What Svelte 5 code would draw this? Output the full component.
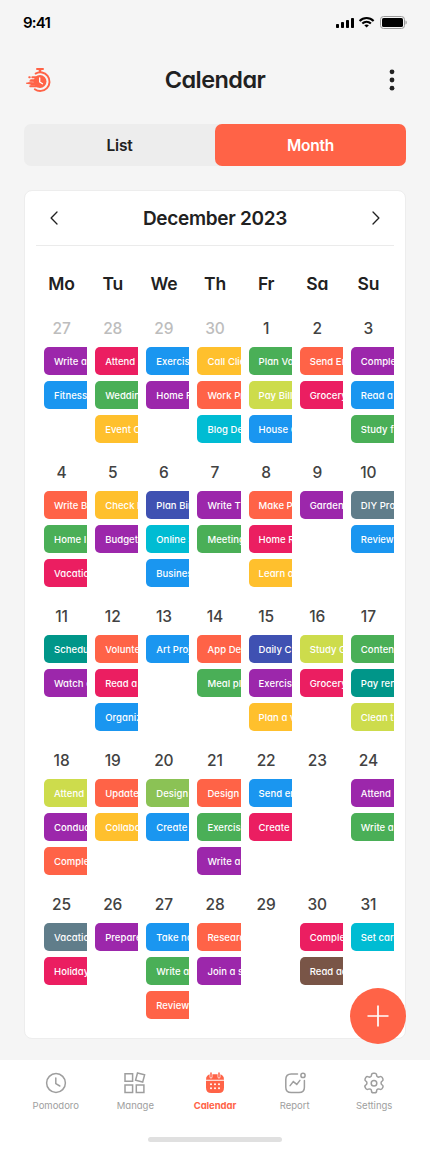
<script>
  const palette = {
    p: '#9c27ab', r: '#eb1e61', b: '#1a96f0', y: '#ffc02d', g: '#4aaf57', l: '#cddc4c',
    o: '#ff6347', c: '#00bcd3', i: '#3f51b2', s: '#607d8a', t: '#009689', n: '#795547', e: '#8bc255'
  };
  const weekdays = ['Mo', 'Tu', 'We', 'Th', 'Fr', 'Sa', 'Su'];
  const days = [
    [27, 'pWrite a', 'bFitness'],
    [28, 'rAttend', 'gWeddin', 'yEvent O'],
    [29, 'bExercise', 'pHome R'],
    [30, 'yCall Clie', 'oWork Pr', 'cBlog De'],
    [1, 'gPlan Va', 'lPay Bill', 'bHouse C'],
    [2, 'oSend Em', 'rGrocery'],
    [3, 'pComple', 'bRead a', 'gStudy f'],
    [4, 'oWrite B', 'gHome I', 'rVacatio'],
    [5, 'yCheck E', 'pBudget'],
    [6, 'iPlan Bir', 'cOnline S', 'bBusines'],
    [7, 'pWrite T', 'gMeeting'],
    [8, 'oMake P', 'rHome R', 'yLearn a'],
    [9, 'pGarden'],
    [10, 'sDIY Pro', 'bReview'],
    [11, 'tSchedu', 'pWatch a'],
    [12, 'oVolunte', 'rRead a', 'bOrganiz'],
    [13, 'bArt Proj'],
    [14, 'oApp De', 'gMeal pl'],
    [15, 'iDaily C', 'pExercise', 'yPlan a v'],
    [16, 'lStudy G', 'rGrocery'],
    [17, 'gConten', 'tPay ren', 'lClean t'],
    [18, 'lAttend', 'pConduc', 'oComple'],
    [19, 'oUpdate', 'yCollabo'],
    [20, 'eDesign', 'bCreate'],
    [21, 'oDesign', 'gExercise', 'pWrite a'],
    [22, 'bSend em', 'rCreate'],
    [23],
    [24, 'pAttend', 'gWrite a'],
    [25, 'sVacatio', 'rHoliday'],
    [26, 'pPrepare'],
    [27, 'bTake no', 'gWrite a', 'oReview'],
    [28, 'oResearc', 'pJoin a s'],
    [29],
    [30, 'rComple', 'nRead ac'],
    [31, 'cSet care']
  ];
</script>

<div class="screen">
  <div class="status">
    <span class="time">9:41</span>
    <svg width="72" height="16" viewBox="0 0 72 16">
      <g>
        <rect x="1" y="10" width="3" height="4" rx=".8" />
        <rect x="6" y="8" width="3" height="6" rx=".8" />
        <rect x="11" y="6" width="3" height="8" rx=".8" />
        <rect x="16" y="4" width="3" height="10" rx=".8" />
      </g>
      <g fill="none" stroke="#000" stroke-width="2.1">
        <path d="M24.6 6.9c4-3.9 10-3.9 14 0" />
        <path d="M27.3 9.6c2.5-2.4 6.1-2.4 8.6 0" />
      </g>
      <path d="M29.3 11.2c1.3-1.1 3.3-1.1 4.6 0l-2.3 2.4z" />
      <rect x="45.5" y="2.5" width="24" height="12" rx="3" fill="none" stroke="#9a9a9a" />
      <rect x="47" y="4" width="21" height="9" rx="1.6" />
      <path d="M70.5 6.5c1.7.4 1.7 3.6 0 4z" fill="#9a9a9a" />
    </svg>
  </div>

  <header>
    <svg width="28" height="28" viewBox="0 0 28 28" fill="none" stroke="#ff6347">
      <path d="M13 3h6" stroke-width="2" stroke-linecap="round" />
      <path d="M16 3.5v3" stroke-width="2.6" />
      <path d="M11.6 7.6A9.3 9.3 0 1 1 10.8 23.2" stroke-width="1.9" stroke-linecap="round" />
      <circle cx="16" cy="15.5" r="6.5" fill="#ff6347" stroke="none" />
      <path d="M8.3 11.3h5M5.2 11.3h.6M7 14.2h6M5 17.200h8M6.2 20.2h7" stroke-width="1.900" stroke-linecap="round" />
      <path d="M2.800 17.200h5M6 15h5M7 18.800h5" stroke-width="1.500" stroke-linecap="round" />
      <path d="M15.700 12v4l2.800 1.700" stroke="#fff" stroke-width="1.300" stroke-linecap="round" stroke-linejoin="round" />
    </svg>
    <h1>Calendar</h1>
    <svg width="28" height="28" viewBox="0 0 28 28" fill="#212121">
      <circle cx="14" cy="5.8" r="2.4" /><circle cx="14" cy="14" r="2.4" /><circle cx="14" cy="22.2" r="2.4" />
    </svg>
  </header>

  <div class="tabs">
    <button>List</button>
    <button class="on">Month</button>
  </div>

  <section class="card">
    <div class="month">
      <svg width="20" height="20" viewBox="0 0 20 20"><path d="M13 4 7.1 10l5.900 6" /></svg>
      <h2>December 2023</h2>
      <svg width="20" height="20" viewBox="0 0 20 20"><path d="M7 4l5.900 6L7 16" /></svg>
    </div>
    <div class="week">
      {#each weekdays as w}<span>{w}</span>{/each}
    </div>
    <div class="grid">
      {#each days as [num, ...events], i}
        <div class="day" class:out={i < 4}>
          <span class="num">{num}</span>
          <div class="events">
            {#each events as ev}
              <div class="chip" style:background={palette[ev[0]]}>{ev.slice(1)}</div>
            {/each}
          </div>
        </div>
      {/each}
    </div>
  </section>

  <button class="fab" aria-label="Add">
    <svg width="24" height="24" viewBox="0 0 24 24"><path d="M12 1.5v21M1.500 12h21" stroke="#fff" stroke-width="1.7" /></svg>
  </button>

  <nav>
    <div class="items">
      <div class="item">
        <svg width="24" height="24" viewBox="0 0 24 24"><circle cx="12" cy="12" r="9.4" /><path d="M11.8 7v5.6l4 2.4" /></svg>
        <span>Pomodoro</span>
      </div>
      <div class="item">
        <svg width="24" height="24" viewBox="0 0 24 24" stroke-linejoin="miter"><path d="M2 2.7h7.6v7.6H2zM2 14h7.6v7.6H2zM13.3 14h7.6v7.6h-7.6zM14.500 2l7.1 1.9-1.9 7.1-7.100-1.900z" /></svg>
        <span>Manage</span>
      </div>
      <div class="item on">
        <svg width="24" height="24" viewBox="0 0 24 24">
          <path d="M3 8.8C3 5.2 4.8 3.300 8.3 3.300h7.400c3.500 0 5.300 1.900 5.300 5.500z" fill="#ff6347" stroke="none" />
          <path d="M3 9.700h18v7.100c0 3.500-1.800 5.200-5.200 5.200H8.200C4.800 22 3 20.300 3 16.800z" fill="#ff6347" stroke="none" />
          <path d="M8 2.200v3.800M16 2.200v3.800" stroke="#fff" stroke-width="2.800" />
          <path d="M8 2v4M16 2v4" stroke="#ff6347" />
          <g fill="#fff" stroke="none"><circle cx="8" cy="13.3" r="1" /><circle cx="12" cy="13.3" r="1" /><circle cx="16" cy="13.3" r="1" /><circle cx="8" cy="17.2" r="1" /><circle cx="12" cy="17.2" r="1" /><circle cx="16" cy="17.2" r="1" /></g>
        </svg>
        <span>Calendar</span>
      </div>
      <div class="item">
        <svg width="24" height="24" viewBox="0 0 24 24"><path d="M14.500 3H8.200C4.600 3 2.800 4.800 2.800 8.400v7.800c0 3.600 1.800 5.400 5.400 5.400H16c3.600 0 5.400-1.800 5.400-5.400V9.500" /><circle cx="20" cy="4.400" r="2.100" /><path d="m7.100 14.600 3.200-4 3.500 2.800 3.100-4" /></svg>
        <span>Report</span>
      </div>
      <div class="item">
        <svg width="24" height="24" viewBox="0 0 24 24"><circle cx="12" cy="12.300" r="2.800" /><path d="m20.800 7.600-.6-1.100c-.5-.9-1.700-1.200-2.600-.7-1.400.8-3 0-3-1.700C14.600 3 13.700 2.200 12.700 2.200h-1.300c-1 0-1.900.8-1.900 1.900 0 1.700-1.700 2.500-3.100 1.700-.9-.5-2.100-.2-2.600.7l-.6 1.100c-.5.9-.2 2 .7 2.600 1.400.8 1.400 2.700 0 3.600-.9.5-1.200 1.700-.7 2.600l.6 1.100c.5.9 1.700 1.200 2.600.7 1.400-.8 3.100.1 3.100 1.700 0 1.100.9 1.900 1.900 1.900h1.300c1 0 1.900-.8 1.900-1.900 0-1.600 1.600-2.500 3-1.700.9.5 2.100.2 2.600-.7l.6-1.100c.5-.9.2-2.100-.7-2.600-1.400-.9-1.400-2.800 0-3.600.9-.6 1.200-1.700.7-2.600z" /></svg>
        <span>Settings</span>
      </div>
    </div>
    <div class="home"></div>
  </nav>
</div>

<style>
  :global(body) { background: #f5f5f5; }
  .screen {
    position: relative;
    box-sizing: border-box;
    width: 430px;
    height: 1150px;
    overflow: hidden;
    background: #f5f5f5;
    color: #212121;
    font-family: Inter, Lato, sans-serif;
    font-feature-settings: 'cv11';
    display: flex;
    flex-direction: column;
  }
  button { font: inherit; font-feature-settings: inherit; border: 0; padding: 0; color: inherit; background: none; }
  h1, h2 { margin: 0; }
  .status {
    height: 44px;
    flex: none;
    display: flex;
    justify-content: space-between;
    align-items: center;
    padding: 0 23px;
  }
  .time { font-size: 15px; font-weight: 600; letter-spacing: -.8px; color: #000; }
  header {
    height: 72px;
    flex: none;
    display: flex;
    justify-content: space-between;
    align-items: center;
    padding: 0 24px;
  }
  header svg:last-child { margin-right: -14px; padding-right: 14px; }
  h1 { font-size: 23.5px; line-height: 32px; font-weight: 600; letter-spacing: -.55px; }
  .tabs {
    margin: 8px 24px 0;
    height: 42px;
    flex: none;
    display: grid;
    grid-template-columns: 1fr 1fr;
    border-radius: 7px;
    background: #ededed;
  }
  .tabs button { font-size: 15.5px; font-weight: 600; letter-spacing: -.2px; border-radius: 7px; }
  .tabs .on { color: #fff; background: #ff6347; }
  .card {
    margin: 24px 24px 0;
    box-sizing: border-box;
    height: 849px;
    flex: none;
    padding: 0 11px;
    border: 1px solid #ededed;
    border-radius: 8px;
    background: #fff;
  }
  .month {
    height: 54px;
    display: flex;
    align-items: center;
    justify-content: space-between;
    padding: 0 8px;
    border-bottom: 1px solid #ebebeb;
  }
  .month path { fill: none; stroke: #212121; stroke-width: 1.3; stroke-linecap: round; stroke-linejoin: round; }
  h2 { font-size: 19px; font-weight: 600; letter-spacing: -.3px; }
  .week {
    height: 66px;
    padding-top: 4px;
    display: grid;
    grid-template-columns: repeat(7, 1fr);
    align-items: center;
    text-align: center;
    font-size: 17.5px;
    font-weight: 600;
    letter-spacing: -.2px;
  }
  .grid { display: grid; grid-template-columns: repeat(7, 1fr); grid-auto-rows: 144px; }
  .day { min-width: 0; display: flex; flex-direction: column; }
  .num { box-sizing: border-box; height: 31px; padding-top: 1px; line-height: 24px; text-align: center; font-size: 15.5px; font-weight: 500; color: #424242; letter-spacing: -.1px; }
  .out .num { color: #bdbdbd; }
  .events { padding-left: 8px; overflow: hidden; display: flex; flex-direction: column; gap: 6px; }
  .chip {
    width: 60px;
    box-sizing: border-box;
    height: 28px;
    line-height: 27px;
    padding: 1px 0 0 10px;
    border-radius: 5px;
    color: #fff;
    font-size: 9.5px;
    font-weight: 500;
    letter-spacing: .06px;
    white-space: nowrap;
  }
  .fab {
    position: absolute;
    left: 350px;
    top: 988px;
    width: 56px;
    height: 56px;
    border-radius: 50%;
    background: #ff6347;
    display: grid;
    place-items: center;
  }
  nav { margin-top: auto; height: 90px; flex: none; background: #fff; }
  .items { display: grid; grid-template-columns: repeat(5, 1fr); padding: 11px 16px 0; }
  .item { display: flex; flex-direction: column; align-items: center; gap: 4px; color: #9e9e9e; font-size: 9.5px; line-height: 14px; font-weight: 400; }
  .item svg { fill: none; stroke: currentColor; stroke-width: 1.5; stroke-linecap: round; }
  .item.on { color: #ff6347; font-weight: 700; letter-spacing: -.05px; }
  .home { width: 134px; height: 5px; margin: 24px auto 0; border-radius: 3px; background: #e0e0e0; }
</style>
